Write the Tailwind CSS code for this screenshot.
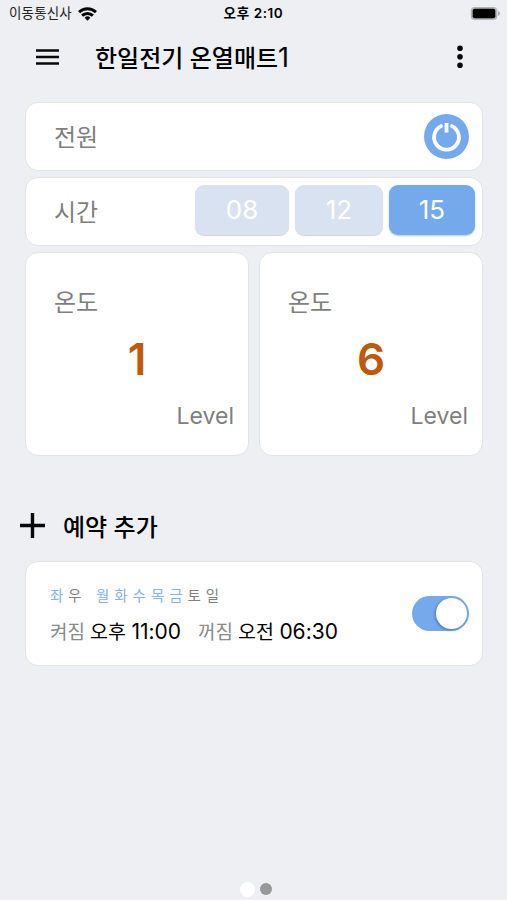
<!DOCTYPE html>
<html lang="ko">
<head>
<meta charset="utf-8">
<meta name="viewport" content="width=device-width, initial-scale=1">
<title>한일전기 온열매트1</title>
<script src="https://cdn.jsdelivr.net/npm/@tailwindcss/browser@4"></script>
</head>
<body class="bg-[#edeff3]">
<div class="flex h-[900px] w-[507px] flex-col overflow-hidden bg-[#edeff3] font-['Inter','Noto_Sans_CJK_KR',sans-serif] text-black whitespace-nowrap">
  <header>
    <div class="grid h-[27px] grid-cols-3 items-center">
      <div class="flex items-center gap-[6px] pl-[9px]">
        <span class="pt-px text-[13.5px] leading-none tracking-[0.15px] text-[#222]">이동통신사</span>
        <svg class="h-[14px] w-[19px]" viewBox="0 0 19 14" fill="none" stroke="#080808" stroke-width="3"><path d="M1 5.1a12.2 12.2 0 0 1 17 0"/><path d="M4.1 8.6a7.7 7.7 0 0 1 10.8 0"/><path d="M9.5 13.7 6.6 10.8a4.1 4.1 0 0 1 5.8 0Z" fill="#080808" stroke="none"/></svg>
      </div>
      <span class="pt-px text-center text-[13.5px] font-semibold leading-none tracking-[0.6px]">오후 2:10</span>
      <div class="flex justify-end pr-[7px]">
        <svg class="h-[15px] w-[30px]" viewBox="0 0 30 15"><rect x=".7" y="1" width="26.6" height="13" rx="4" fill="#b5b5b7"/><rect x="2.7" y="2.8" width="22.6" height="9.4" rx="2" fill="#000"/><path d="M28 5q2 .6 2 2.5T28 10Z" fill="#aaa"/></svg>
      </div>
    </div>
    <div class="flex h-[60px] items-center pl-[36px] pr-[42px]">
      <svg class="h-[17px] w-[23px]" viewBox="0 0 23 17" stroke="#080808" stroke-width="2.4"><path d="M0 1.5h23M0 8h23M0 14.5h23"/></svg>
      <span class="ml-[36px] pt-px text-[24px] font-medium leading-none">한일전기 온열매트<span class="text-[27px] font-normal leading-none">1</span></span>
      <svg class="ml-auto h-[24px] w-[10px]" viewBox="0 0 10 24" fill="#080808"><circle cx="5" cy="3.2" r="2.8"/><circle cx="5" cy="11.7" r="2.8"/><circle cx="5" cy="20.2" r="2.8"/></svg>
    </div>
  </header>
  <main class="ml-[25px] mr-[24px] mt-[15px] flex flex-col gap-[6px] text-[#7f7f7f]">
    <section class="flex h-[69px] items-center justify-between rounded-[13px] border border-[#e2e3e5] bg-white pl-[28px] pr-[13px]">
      <span class="pt-[3px] text-[24px] leading-none">전원</span>
      <svg class="h-[45px] w-[45px]" viewBox="0 0 45 45"><circle cx="22.5" cy="22.5" r="22.5" fill="#74a9ec"/><g fill="none" stroke="#fff" stroke-width="3.8"><path d="M17 12.1a12.4 12.4 0 1 0 11 0" stroke-linecap="round"/><path d="M22.5 9v9.5"/></g></svg>
    </section>
    <section class="flex h-[69px] items-center rounded-[13px] border border-[#e2e3e5] bg-white pl-[28px] pr-[7px]">
      <span class="pt-[3px] text-[24px] leading-none">시간</span>
      <div class="mb-[4px] ml-auto flex gap-[6px] text-[26px] font-normal leading-none text-white">
        <div class="flex h-[50px] w-[94px] items-center justify-center rounded-[9px] bg-[#d9e2f1] shadow-[0_1px_1px_#cfd4da]">08</div>
        <div class="flex h-[50px] w-[88px] items-center justify-center rounded-[9px] bg-[#d9e2f1] shadow-[0_1px_1px_#cfd4da]">12</div>
        <div class="flex h-[50px] w-[86px] items-center justify-center rounded-[9px] bg-[#74a9ec] shadow-[0_1px_2px_#b8c8dc]">15</div>
      </div>
    </section>
    <section class="grid h-[204px] grid-cols-2 gap-[10px]">
      <div class="flex flex-col rounded-[13px] border border-[#e2e3e5] bg-white pl-[28px] pr-[14px] pt-[37px]">
        <span class="text-[24px] leading-[26px]">온도</span>
        <span class="mt-[17px] pr-[14px] text-center text-[44px] font-semibold leading-[52px] text-[#bd5a0c]">1</span>
        <span class="mt-[14px] text-right text-[23px] leading-[34px]">Level</span>
      </div>
      <div class="flex flex-col rounded-[13px] border border-[#e2e3e5] bg-white pl-[28px] pr-[14px] pt-[37px]">
        <span class="text-[24px] leading-[26px]">온도</span>
        <span class="mt-[17px] pr-[14px] text-center text-[44px] font-semibold leading-[52px] text-[#bd5a0c]">6</span>
        <span class="mt-[14px] text-right text-[23px] leading-[34px]">Level</span>
      </div>
    </section>
  </main>
  <div class="mt-[49px] flex h-[42px] items-center gap-[18px] pl-[20px]">
    <svg class="mb-[2px] h-[25px] w-[25px]" viewBox="0 0 25 25" stroke="#080808" stroke-width="3.4"><path d="M0 12.5h25M12.5 0v25"/></svg>
    <span class="pt-[3px] text-[24px] font-medium leading-none">예약 추가</span>
  </div>
  <section class="ml-[25px] mr-[24px] mt-[14px] flex h-[105px] items-center justify-between rounded-[13px] border border-[#e2e3e5] bg-white pl-[24px] pr-[13px]">
    <div class="pt-[4px]">
      <div class="flex text-[14.5px] leading-[20px] text-[#7f7f7f]">
        <span class="w-[18px] text-[#86b2ee]">좌</span><span class="w-[28px]">우</span>
        <span class="w-[18.3px] text-[#86b2ee]">월</span><span class="w-[18.3px] text-[#86b2ee]">화</span><span class="w-[18.3px] text-[#86b2ee]">수</span><span class="w-[18.3px] text-[#86b2ee]">목</span><span class="w-[18.3px] text-[#86b2ee]">금</span><span class="w-[18.3px]">토</span><span class="w-[18.3px]">일</span>
      </div>
      <div class="mt-[14px] flex items-baseline text-[19px] leading-[24px]">
        <span class="w-[40px] text-[#8a8a8a]">켜짐</span><span class="w-[108px] text-[19.5px]">오후 <span class="text-[21px]">11:00</span></span><span class="w-[40px] text-[#8a8a8a]">꺼짐</span><span class="text-[19.5px]">오전 <span class="text-[21px]">06:30</span></span>
      </div>
    </div>
    <div class="flex h-[35px] w-[57px] items-center justify-end rounded-full bg-[#74a9ec] pr-[2px]"><div class="h-[31px] w-[31px] rounded-full bg-white shadow-[-1px_1px_3px_#4d78ac]"></div></div>
  </section>
  <div class="mt-auto flex h-[22px] items-center justify-center gap-[5px] pl-[4px]">
    <span class="h-[15px] w-[15px] rounded-full bg-white"></span>
    <span class="h-[12px] w-[12px] rounded-full bg-[#989898]"></span>
  </div>
</div>
</body>
</html>
